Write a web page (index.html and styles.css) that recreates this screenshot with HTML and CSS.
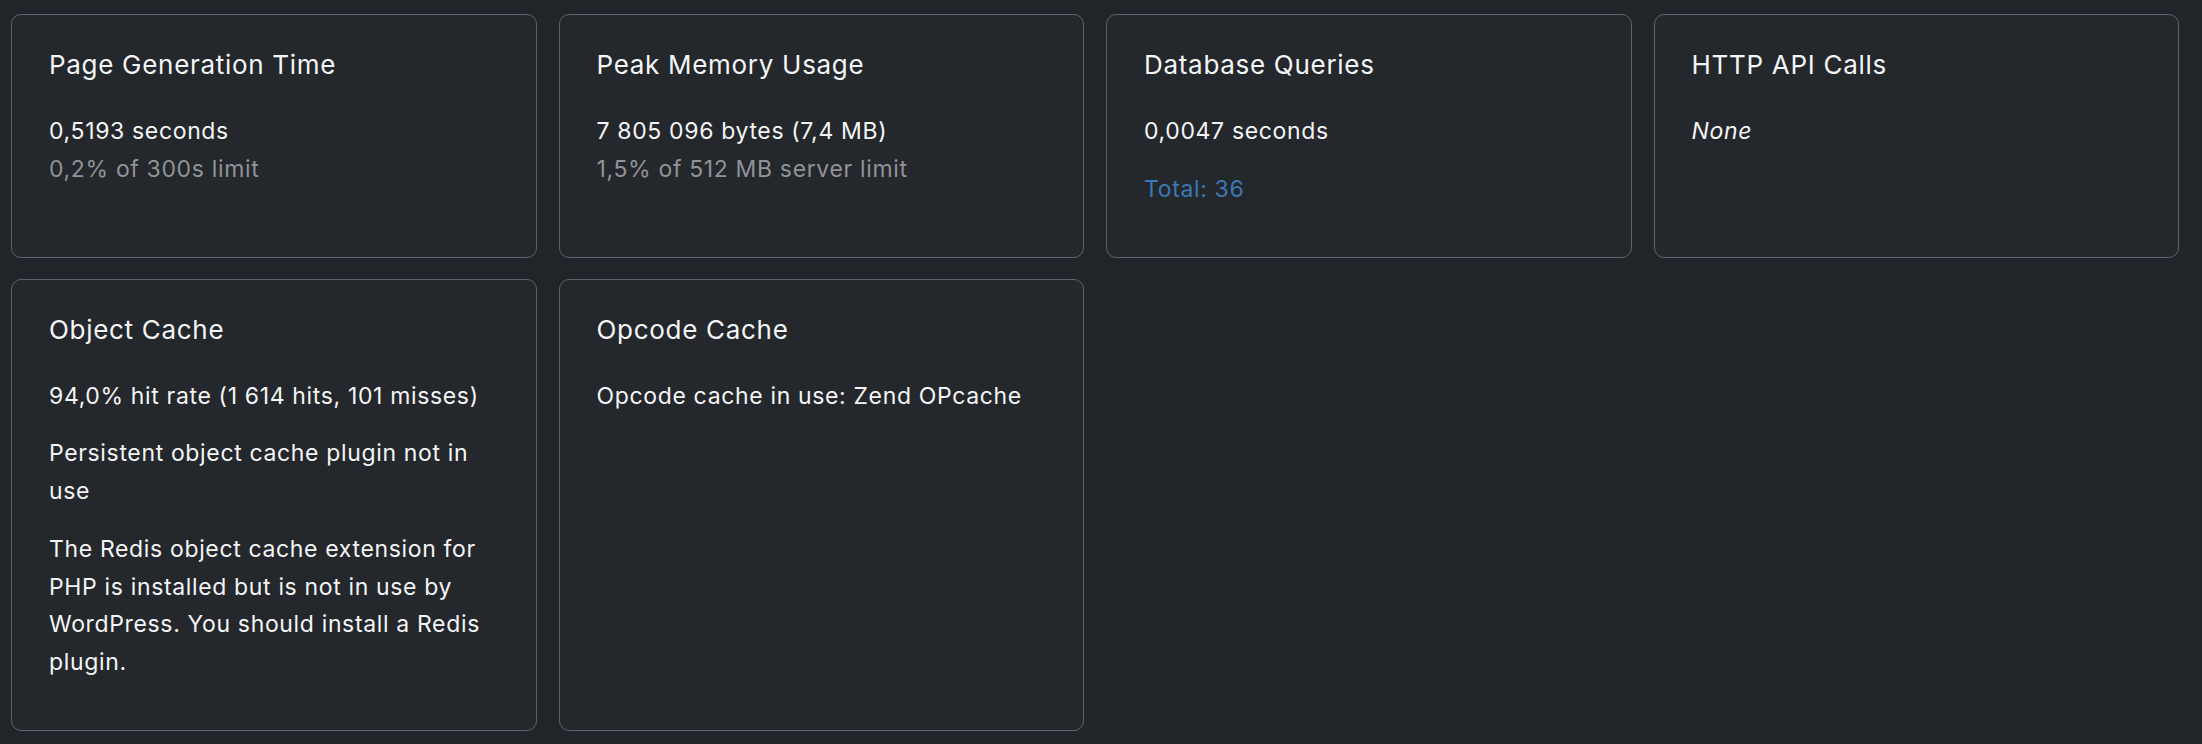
FILE: index.html
```html
<!DOCTYPE html>
<html lang="en">
  <head>
    <meta charset="UTF-8" />
    <meta name="viewport" content="width=device-width, initial-scale=1.0" />
    <title>Overview</title>
    <link rel="stylesheet" href="styles.css">
  </head>
  <body>
    <div class="overview">
      <section class="card">
        <h3>Page Generation Time</h3>
        <p>
          0,5193 seconds<br />
          <span class="muted">0,2% of 300s limit</span>
        </p>
      </section>

      <section class="card">
        <h3>Peak Memory Usage</h3>
        <p>
          7 805 096 bytes (7,4 MB)<br />
          <span class="muted">1,5% of 512 MB server limit</span>
        </p>
      </section>

      <section class="card">
        <h3>Database Queries</h3>
        <p>0,0047 seconds</p>
        <p><a class="link" href="#">Total: 36</a></p>
      </section>

      <section class="card">
        <h3>HTTP API Calls</h3>
        <p><em>None</em></p>
      </section>

      <section class="card">
        <h3>Object Cache</h3>
        <p>94,0% hit rate (1 614 hits, 101 misses)</p>
        <p>Persistent object cache plugin not in use</p>
        <p>
          The Redis object cache extension for PHP is installed but is not in
          use by WordPress. You should install a Redis plugin.
        </p>
      </section>

      <section class="card">
        <h3>Opcode Cache</h3>
        <p>Opcode cache in use: Zend OPcache</p>
      </section>
    </div>
  </body>
</html>
```

FILE: styles.css
```css
body {
  margin: 0;
  padding: 0;
  background: #212428;
  color: #f4f5f6;
  font-family: Inter, "Noto Sans", sans-serif;
}

.overview {
  display: grid;
  grid-template-columns: repeat(4, 1fr);
  column-gap: 22px;
  row-gap: 21px;
  padding: 14px 23px 13px 11px;
}

.card {
  background: #24272b;
  border: 1px solid #5a6570;
  border-radius: 10px;
  padding: 34px 37px 28px;
}

.card h3 {
  margin: 0 0 33px 0;
  font-size: 26px;
  font-weight: 400;
  line-height: 1.2;
  letter-spacing: 0.7px;
}

.card p {
  margin: 0 0 20px 0;
  font-size: 23px;
  line-height: 37.7px;
  letter-spacing: 0.65px;
}

.muted {
  color: #909398;
}

.link {
  color: #3b78b6;
  text-decoration: none;
}
```
